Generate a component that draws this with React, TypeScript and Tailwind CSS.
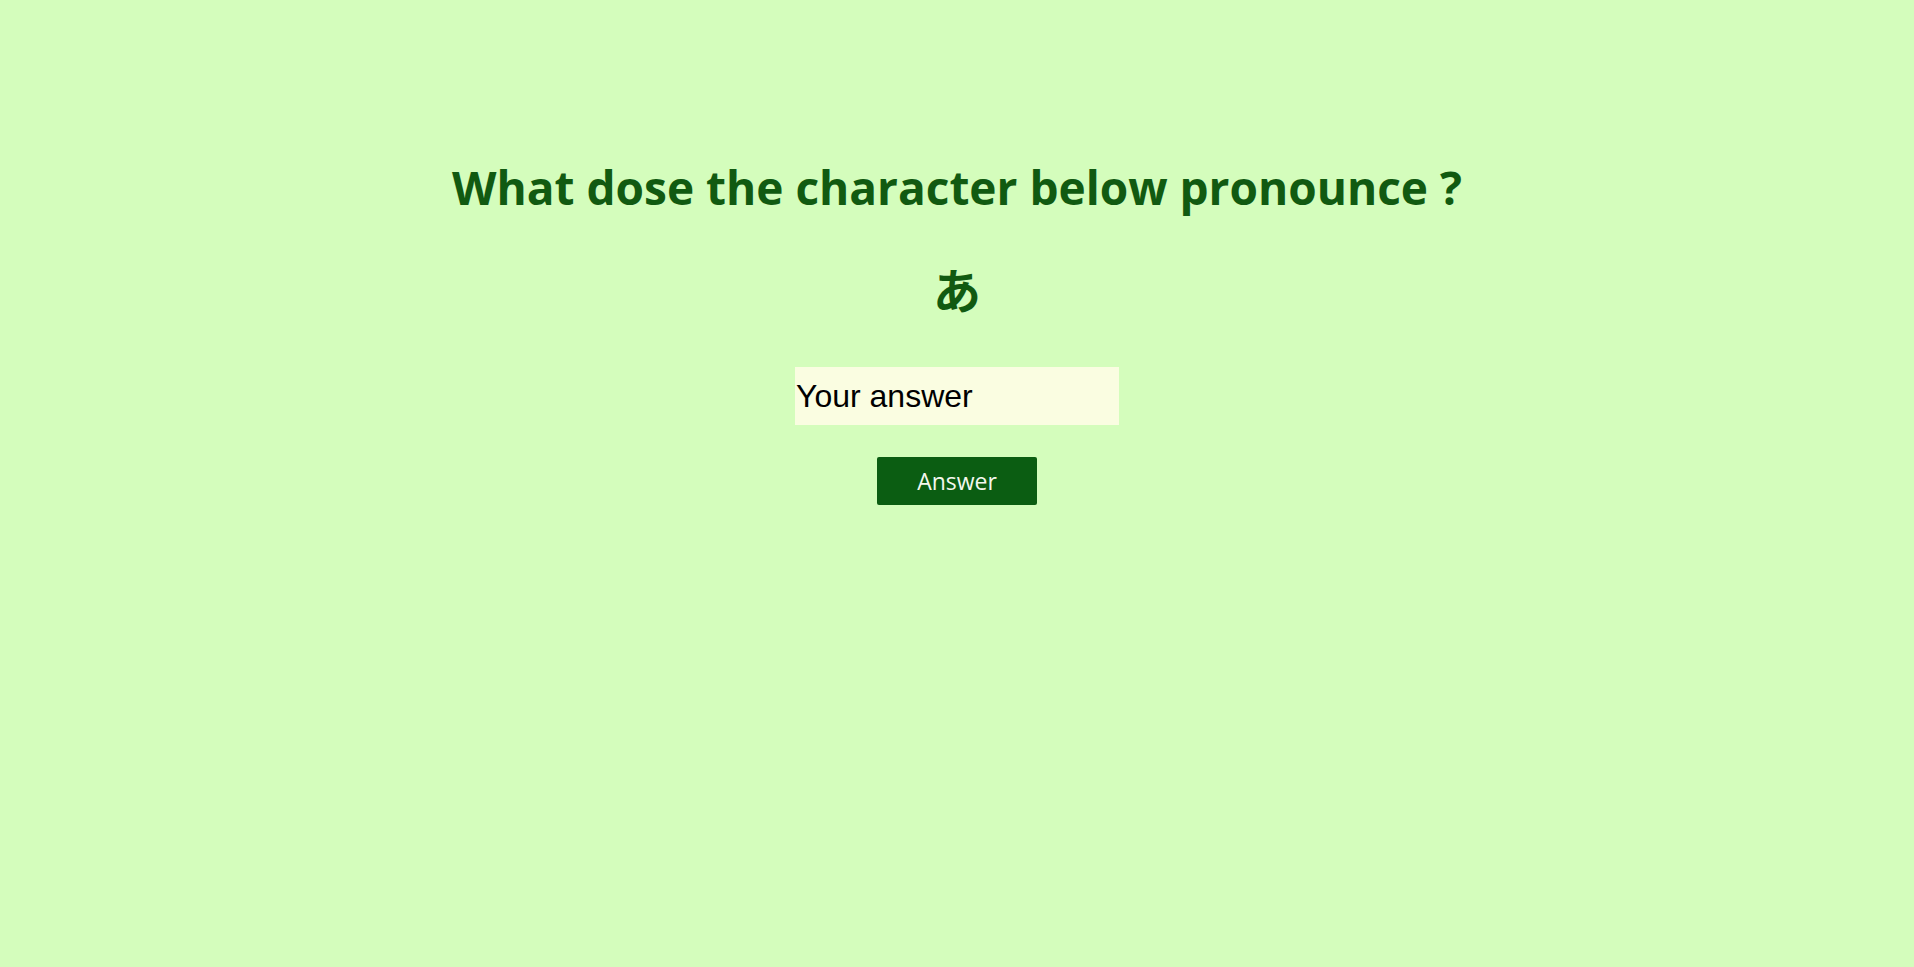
import React from 'react'

const App = () => {
  return (
    <div className="min-h-screen w-full bg-[#d4fdbc] flex flex-col items-center pt-[159px]">
      <h1 className="text-[46px] leading-[56px] font-bold text-[#115a11] font-['Open_Sans',sans-serif]">
        What dose the character below pronounce ?
      </h1>
      <div className="mt-[45px] text-[48px] leading-[56px] font-bold text-[#115a11] font-['Noto_Sans_CJK_JP',sans-serif]">
        あ
      </div>
      <input
        type="text"
        placeholder="Your answer"
        className="mt-[51px] w-[324px] h-[58px] px-[1px] bg-[#fafde1] text-[32px] text-black placeholder:text-black font-['Liberation_Sans',sans-serif] outline-none"
      />
      <button className="mt-[32px] w-[160px] h-[48px] rounded-[2px] bg-[#0b5d12] text-[#f4f8ee] text-[23px] font-['Open_Sans',sans-serif]">
        Answer
      </button>
    </div>
  )
}

export default App
